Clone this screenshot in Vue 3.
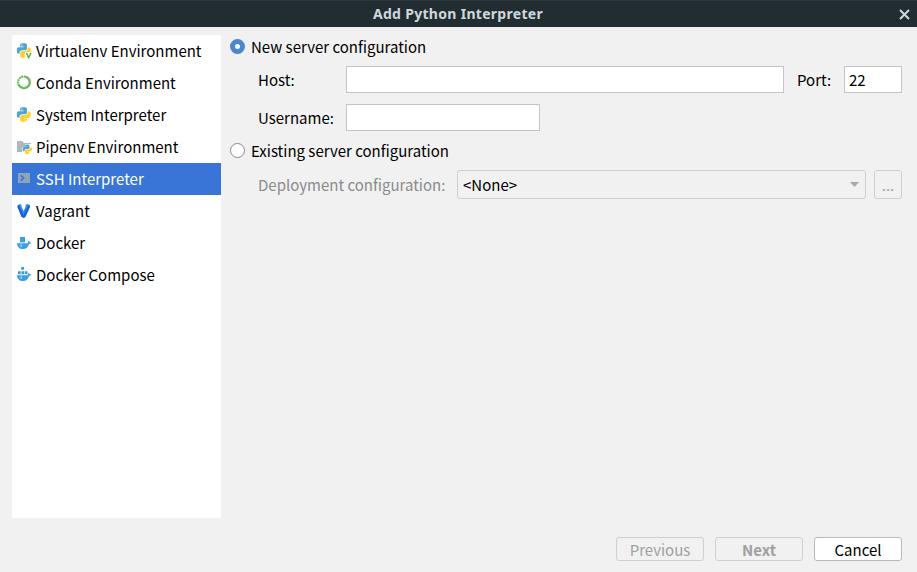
<script setup>
import { ref } from 'vue'

const environments = [
  { label: 'Virtualenv Environment', icon: 'virtualenv' },
  { label: 'Conda Environment', icon: 'conda' },
  { label: 'System Interpreter', icon: 'python' },
  { label: 'Pipenv Environment', icon: 'pipenv' },
  { label: 'SSH Interpreter', icon: 'ssh' },
  { label: 'Vagrant', icon: 'vagrant' },
  { label: 'Docker', icon: 'docker' },
  { label: 'Docker Compose', icon: 'compose' },
]
const selected = ref('ssh')
const mode = ref('new')
const port = ref('22')
const host = ref('')
const username = ref('')
</script>

<template>
  <div class="dialog">
    <svg class="defs" width="0" height="0">
      <defs>
        <g id="python">
          <path fill="#4fa5d0" d="M4 2.400C4 .9 5.200.3 7.600.3S11 .9 11 2.300V5.300C11 6.700 10.200 7.300 9 7.300H6C4.400 7.300 3.600 8.200 3.600 9.600V10.700H2.600C1.200 10.700.8 9.400.8 7.500S1.500 4.200 2.900 4.200H7.600V3.600H4z" />
          <path fill="#ffd02c" d="M11 12.800C11 14.200 9.900 14.900 7.500 14.900S4.200 14.200 4.200 12.800V10C4.200 8.700 5 8 6.200 8H9.200C10.800 8 11.700 7.200 11.700 5.800V4.400H12.700C14.200 4.400 14.800 5.700 14.800 7.500S14.200 10.900 12.800 10.900H7.600V11.500H11z" />
          <rect x="5.400" y="1.600" width="1.100" height="1.100" fill="#d4e9f3" />
          <rect x="8.700" y="12.600" width="1.100" height="1.100" fill="#fff2c0" />
        </g>
        <path id="whale" d="M1 8.200h10.500c.6-.3.800-.9.600-1.800l.7-.6c.6.4.9 1 .9 1.500.6-.1 1.200 0 1.600.3-.4.900-1.200 1.400-2.200 1.300C12.200 12 10.200 14 7 14 3.400 14 1.200 12 1 8.200z" />
      </defs>
    </svg>

    <header class="titlebar">
      <h1>Add Python Interpreter</h1>
      <svg class="close" viewBox="0 0 11 11"><path d="M1 1l9 9M10 1l-9 9" /></svg>
    </header>

    <main class="body">
      <ul class="sidebar">
        <li
          v-for="env in environments"
          :key="env.icon"
          :class="{ active: selected === env.icon }"
          @click="selected = env.icon"
        >
          <svg class="icon" viewBox="0 0 16 16">
            <template v-if="env.icon === 'virtualenv'">
              <use href="#python" />
              <path d="M9 9h7v7H9z" fill="#fff" />
              <path d="M10.400 9.800l2.300 5 2.300-5" fill="none" stroke="#62b543" stroke-width="1.500" />
            </template>
            <template v-else-if="env.icon === 'conda'">
              <circle cx="8" cy="7.300" r="5.900" fill="none" stroke="#65b853" stroke-width="2" stroke-dasharray="25 .6 1.800 .6 1.800 .6 1.800 .6 1.800 .6 1.800 .6" transform="rotate(-85 8 7.300)" />
              <circle cx="8" cy="7.300" r="5" fill="none" stroke="#7dc46d" stroke-width=".8" stroke-dasharray="19 13" transform="rotate(-65 8 7.300)" />
            </template>
            <use v-else-if="env.icon === 'python'" href="#python" />
            <template v-else-if="env.icon === 'pipenv'">
              <path d="M1 2h5l2 2h7v9H1z" fill="#adb7be" />
              <path d="M9 5H16V16H6V8.500h3z" fill="#fff" />
              <use href="#python" transform="translate(6.200 5.300) scale(.66)" />
            </template>
            <template v-else-if="env.icon === 'ssh'">
              <path d="M2 2h12v10H2z" fill="#8fa3b9" />
              <path d="M4.800 4.400L7.500 7l-2.700 2.600" fill="none" stroke="#3875d7" stroke-width="1.700" />
            </template>
            <template v-else-if="env.icon === 'vagrant'">
              <path d="M1.500 2.300L4 1l1.500 1v1.700L8 8.700V13l-2.500.800z" fill="#2a8bf2" />
              <path d="M14 2.300L11.500 1 9.600 2v1.700L6.500 10.500l-1 3.300L8 15z" fill="#2a8bf2" />
              <path d="M14 2.300v1.800L9.700 13.400 8 15l-.3-3.500 4-8z" fill="#1763cd" />
              <path d="M1.500 2.300l1.700.8L8 13.200V15l-2.500-1.200-4-9.600z" fill="#1763cd" />
            </template>
            <template v-else>
              <use href="#whale" fill="#389fe6" />
              <path v-if="env.icon === 'docker'" d="M4 2h5v5.400H4z" fill="#389fe6" />
              <path v-else d="M5.200 0H8v2.800H5.200zM2 4.200h2.700v3H2zM5.400 4.200h2.700v3H5.400zM8.800 4.200h2.700v3H8.800z" fill="#389fe6" />
              <circle cx="5" cy="10.500" r="1.200" fill="#b5dcf7" />
              <circle cx="4.700" cy="10.200" r=".6" fill="#389fe6" />
            </template>
          </svg>
          <span>{{ env.label }}</span>
        </li>
      </ul>

      <section class="form">
        <label class="choice">
          <input v-model="mode" type="radio" value="new" />
          <span>New server configuration</span>
        </label>
        <div class="row host-row">
          <span class="caption">Host:</span>
          <input v-model="host" class="field host" type="text" />
          <span class="port-caption">Port:</span>
          <input v-model="port" class="field port" type="text" />
        </div>
        <div class="row user-row">
          <span class="caption">Username:</span>
          <input v-model="username" class="field user" type="text" />
        </div>
        <label class="choice existing">
          <input v-model="mode" type="radio" value="existing" />
          <span>Existing server configuration</span>
        </label>
        <div class="row deploy-row">
          <span class="deploy-caption">Deployment configuration:</span>
          <div class="combo">
            <span>&lt;None&gt;</span>
            <svg viewBox="0 0 9 5"><path d="M0 0h9L4.500 5z" /></svg>
          </div>
          <button class="more" disabled>...</button>
        </div>
      </section>
    </main>

    <footer class="actions">
      <button disabled>Previous</button>
      <button class="next" disabled>Next</button>
      <button class="cancel">Cancel</button>
    </footer>
  </div>
</template>

<style>
body {
  margin: 0;
}
</style>

<style scoped>
* {
  box-sizing: border-box;
}
.dialog {
  display: flex;
  flex-direction: column;
  width: 917px;
  height: 572px;
  background: #f1f1f1;
  color: #000;
  font: 15px/24px "Noto Sans CJK SC", sans-serif;
  white-space: nowrap;
  overflow: hidden;
}
.defs {
  position: absolute;
}
.titlebar {
  display: grid;
  grid-template-columns: 1fr auto 1fr;
  align-items: center;
  height: 27px;
  flex: none;
  padding: 0 7px 0 6px;
  background: #222d32;
  border-top: 1px solid #2d393e;
}
h1 {
  grid-column: 2;
  margin: 0;
  color: #cfd8dc;
  font: bold 14px/24px "Noto Sans", sans-serif;
  letter-spacing: .3px;
}
.close {
  justify-self: end;
  width: 11px;
  height: 11px;
  fill: none;
  stroke: #cfd8dc;
  stroke-width: 2;
}
.body {
  display: flex;
  flex: 1;
  padding: 8px 15px 0 12px;
}
.sidebar {
  width: 209px;
  height: 483px;
  margin: 0;
  padding: 0;
  list-style: none;
  background: #fff;
}
.sidebar li {
  display: flex;
  align-items: center;
  gap: 4px;
  height: 32px;
  padding-left: 4px;
}
.sidebar li.active {
  background: #3875d7;
  color: #fff;
}
.icon {
  width: 16px;
  height: 16px;
  flex: none;
}
.form {
  flex: 1;
  margin-left: 9px;
}
.choice {
  display: flex;
  align-items: center;
  gap: 6px;
  height: 23px;
}
.choice input {
  appearance: none;
  width: 15px;
  height: 15px;
  margin: 0;
  border: 1px solid #898989;
  border-radius: 50%;
  background: #fff;
}
.choice input:checked {
  border: 5px solid #4a87cb;
}
.row {
  display: flex;
  align-items: center;
  padding-left: 28px;
}
.host-row {
  margin-top: 8px;
}
.user-row {
  margin-top: 11px;
}
.existing {
  margin-top: 8px;
}
.deploy-row {
  margin-top: 8px;
}
.caption {
  width: 88px;
}
.field {
  height: 27px;
  padding: 0 4px;
  border: 1px solid #c4c4c4;
  background: #fff;
  font: inherit;
  outline: none;
}
.host {
  width: 438px;
}
.port-caption {
  width: 47px;
  margin-left: 13px;
}
.port {
  width: 58px;
}
.user {
  width: 194px;
}
.deploy-caption {
  width: 199px;
  color: #8b8b8b;
}
.combo {
  display: flex;
  align-items: center;
  justify-content: space-between;
  width: 409px;
  height: 29px;
  padding: 0 6px 0 5px;
  border: 1px solid #cfcfcf;
  border-radius: 3px;
}
.combo svg {
  width: 9px;
  height: 5px;
  fill: #a8a8a8;
}
button {
  width: 88px;
  height: 24px;
  padding: 1px 0 0;
  border: 1px solid #cfcfcf;
  border-radius: 3px;
  background: #f1f1f1;
  color: #a0a0a0;
  font: 15px/22px "Noto Sans CJK SC", sans-serif;
}
.more {
  width: 28px;
  height: 29px;
  margin-left: 8px;
}
.actions {
  display: flex;
  justify-content: flex-end;
  gap: 11px;
  padding: 0 15px 11px;
}
.next {
  font-weight: bold;
}
.cancel {
  border-color: #b9b9b9;
  background: #fff;
  color: #000;
}
</style>
